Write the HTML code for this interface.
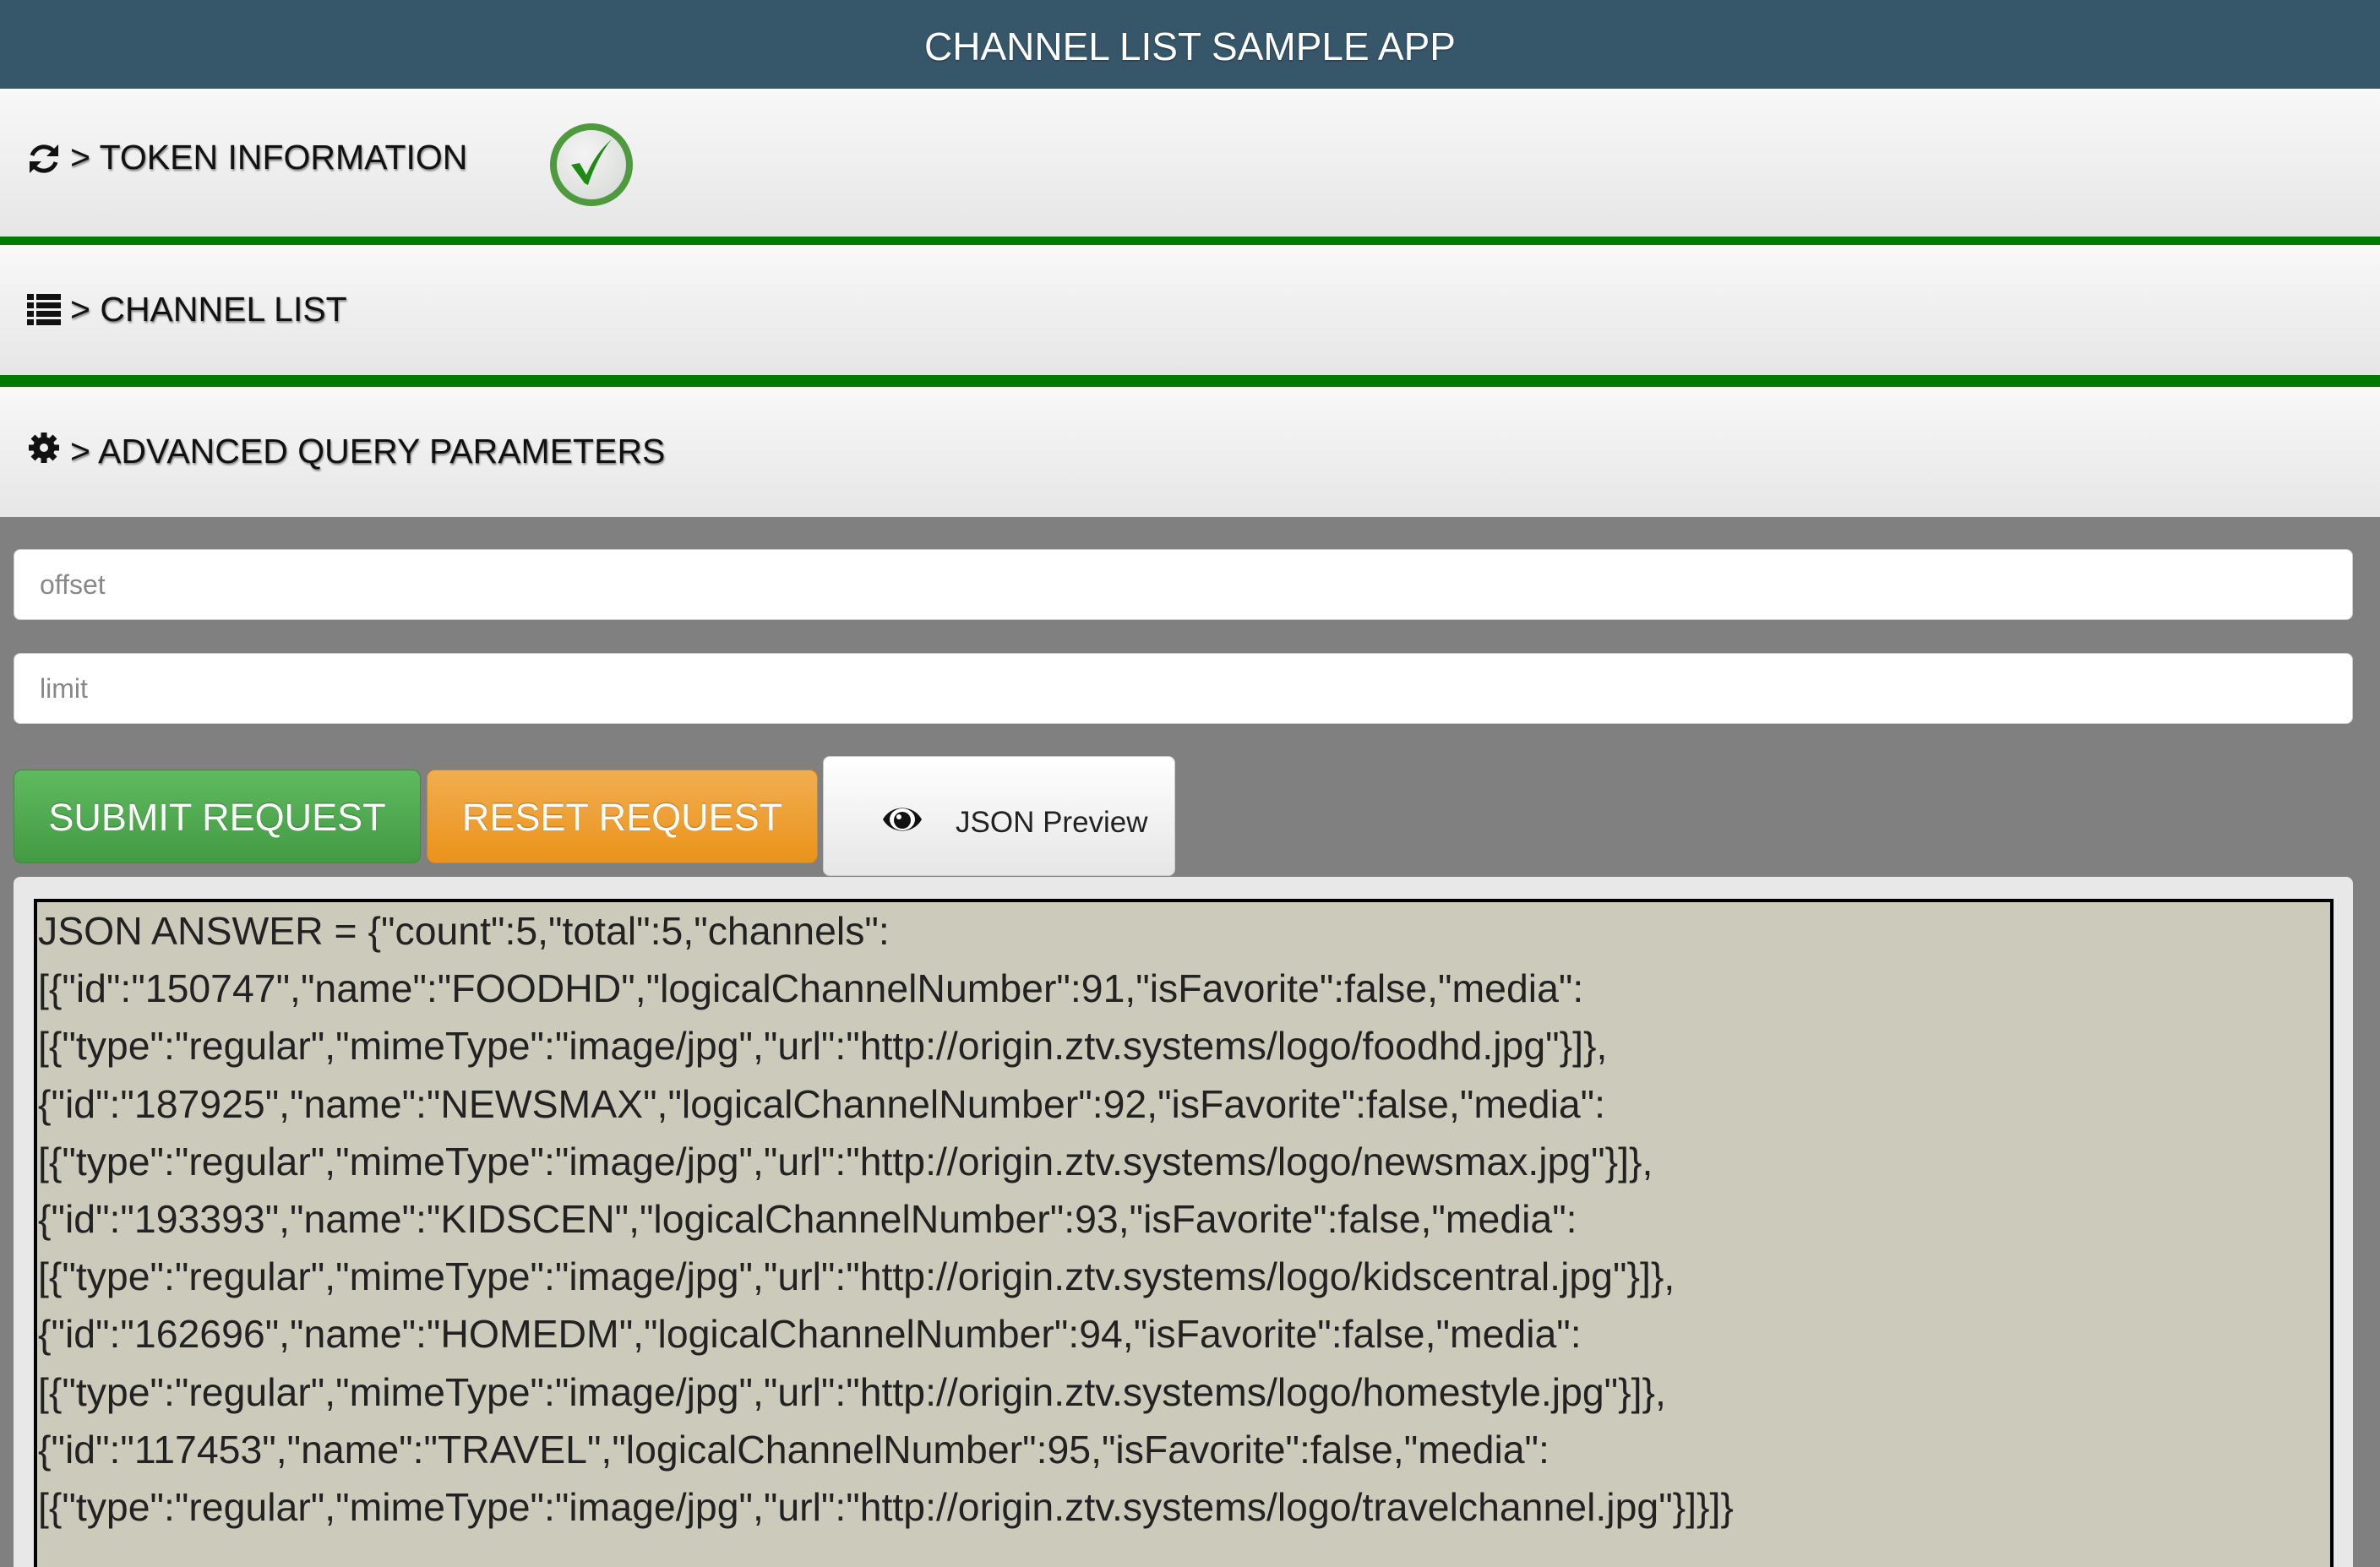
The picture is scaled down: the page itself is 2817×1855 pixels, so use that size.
<!DOCTYPE html>
<html style="width:2817px;height:1855px;overflow:hidden"><head><meta charset="utf-8"><style>
*{margin:0;padding:0;box-sizing:border-box}
body{width:2817px;height:1855px;overflow:hidden;background:#808080;font-family:"Liberation Sans",Arial,sans-serif;position:relative}
.hdr{position:absolute;left:0;top:0;width:2817px;height:105px;background:#36576a;color:#fff;font-size:46px;text-align:center;line-height:110px;text-shadow:0 1px 2px rgba(0,0,0,.4)}
.sec{position:absolute;left:0;width:2817px;background:linear-gradient(#f8f8f8,#e6e6e6);}
.sec .t{position:absolute;left:83px;font-size:41px;color:#111;text-shadow:1px 2px 2px rgba(0,0,0,.45);white-space:nowrap}
.sec svg{position:absolute}
.bar{position:absolute;left:0;width:2817px;background:#007a00}
.inp{position:absolute;left:16px;width:2769px;height:84px;background:#fff;border-radius:8px;border:1px solid #ccc;font-size:32px;color:#888;padding-left:30px;line-height:82px}
.btn{position:absolute;top:911px;height:111px;border-radius:10px;color:#fff;font-size:45px;text-align:center;line-height:111px;text-shadow:0 -1px 1px rgba(0,0,0,.3)}
.panel{position:absolute;left:16px;top:1038px;width:2769px;height:817px;background:#e8e8e8;border-radius:8px 8px 0 0}
.box{position:absolute;left:40px;top:1064px;width:2722px;height:791px;background:#cccbbb;border:4px solid #000;border-bottom:none;font-size:46.4px;color:#222;line-height:68.2px;padding-left:1px;white-space:nowrap;overflow:hidden}
</style></head><body>
<div class="hdr">CHANNEL LIST SAMPLE APP</div>

<div class="sec" style="top:105px;height:175px">
<svg style="left:31px;top:62px" width="42" height="42" viewBox="0 0 42 42"><path d="M34 14 A15 15 0 0 0 7 17" fill="none" stroke="#111" stroke-width="5"/><path d="M38 4 L38 18 L24 18 Z" fill="#111"/><path d="M8 28 A15 15 0 0 0 35 25" fill="none" stroke="#111" stroke-width="5"/><path d="M4 38 L4 24 L18 24 Z" fill="#111"/></svg>
<div class="t" style="top:58px">&gt; TOKEN INFORMATION</div>
<svg style="left:648px;top:38px" width="104" height="104" viewBox="0 0 104 104"><defs><radialGradient id="g" cx=".4" cy=".35" r=".7"><stop offset="0" stop-color="#f4f4f4"/><stop offset="1" stop-color="#d8dcd8"/></radialGradient></defs><circle cx="52" cy="52" r="45" fill="url(#g)" stroke="#4f9a3f" stroke-width="8"/><path d="M28 52 L44 74 L48 76 C56 52 66 34 76 22 C64 32 54 46 46 64 L38 50 Z" fill="#1d8a13"/></svg>
</div>
<div class="bar" style="top:280px;height:10px"></div>

<div class="sec" style="top:290px;height:154px">
<svg style="left:32px;top:58px" width="40" height="38" viewBox="0 0 40 38"><g fill="#111"><rect x="0" y="0" width="8" height="7"/><rect x="11" y="0" width="29" height="7"/><rect x="0" y="10" width="8" height="7"/><rect x="11" y="10" width="29" height="7"/><rect x="0" y="20" width="8" height="7"/><rect x="11" y="20" width="29" height="7"/><rect x="0" y="30" width="8" height="7"/><rect x="11" y="30" width="29" height="7"/></g></svg>
<div class="t" style="top:53px">&gt; CHANNEL LIST</div>
</div>
<div class="bar" style="top:444px;height:14px"></div>

<div class="sec" style="top:458px;height:154px">
<svg style="left:32px;top:52px" width="40" height="40" viewBox="0 0 40 40"><g fill="#111"><circle cx="20" cy="20" r="13"/><g stroke="#111" stroke-width="7"><line x1="20" y1="2" x2="20" y2="38"/><line x1="2" y1="20" x2="38" y2="20"/><line x1="7" y1="7" x2="33" y2="33"/><line x1="33" y1="7" x2="7" y2="33"/></g></g><circle cx="20" cy="20" r="5" fill="#eee"/></svg>
<div class="t" style="top:53px">&gt; ADVANCED QUERY PARAMETERS</div>
</div>

<div class="inp" style="top:650px">offset</div>
<div class="inp" style="top:773px">limit</div>

<div class="btn" style="left:16px;width:482px;background:linear-gradient(#5fba5f,#439a43);border:1px solid #3d8b3d">SUBMIT REQUEST</div>
<div class="btn" style="left:505px;width:463px;background:linear-gradient(#f1ae4f,#eb931b);border:1px solid #d58512">RESET REQUEST</div>
<div style="position:absolute;left:974px;top:895px;width:417px;height:142px;background:linear-gradient(#fff,#e6e6e6);border:1px solid #ccc;border-radius:8px">
<svg style="position:absolute;left:68px;top:52px" width="50" height="44" viewBox="0 0 50 44"><path d="M2 22 C12 4 38 4 48 22 C38 40 12 40 2 22 Z" fill="#111"/><ellipse cx="25" cy="22" rx="15" ry="13" fill="#fff"/><circle cx="25" cy="23" r="10" fill="#111"/><circle cx="21" cy="19" r="3" fill="#fff"/></svg>
<div style="position:absolute;left:156px;top:58px;font-size:35px;color:#222">JSON Preview</div>
</div>

<div class="panel"></div>
<div class="box">JSON ANSWER = {"count":5,"total":5,"channels":<br>[{"id":"150747","name":"FOODHD","logicalChannelNumber":91,"isFavorite":false,"media":<br>[{"type":"regular","mimeType":"image/jpg","url":"http://origin.ztv.systems/logo/foodhd.jpg"}]},<br>{"id":"187925","name":"NEWSMAX","logicalChannelNumber":92,"isFavorite":false,"media":<br>[{"type":"regular","mimeType":"image/jpg","url":"http://origin.ztv.systems/logo/newsmax.jpg"}]},<br>{"id":"193393","name":"KIDSCEN","logicalChannelNumber":93,"isFavorite":false,"media":<br>[{"type":"regular","mimeType":"image/jpg","url":"http://origin.ztv.systems/logo/kidscentral.jpg"}]},<br>{"id":"162696","name":"HOMEDM","logicalChannelNumber":94,"isFavorite":false,"media":<br>[{"type":"regular","mimeType":"image/jpg","url":"http://origin.ztv.systems/logo/homestyle.jpg"}]},<br>{"id":"117453","name":"TRAVEL","logicalChannelNumber":95,"isFavorite":false,"media":<br>[{"type":"regular","mimeType":"image/jpg","url":"http://origin.ztv.systems/logo/travelchannel.jpg"}]}]}</div>
</body></html>
